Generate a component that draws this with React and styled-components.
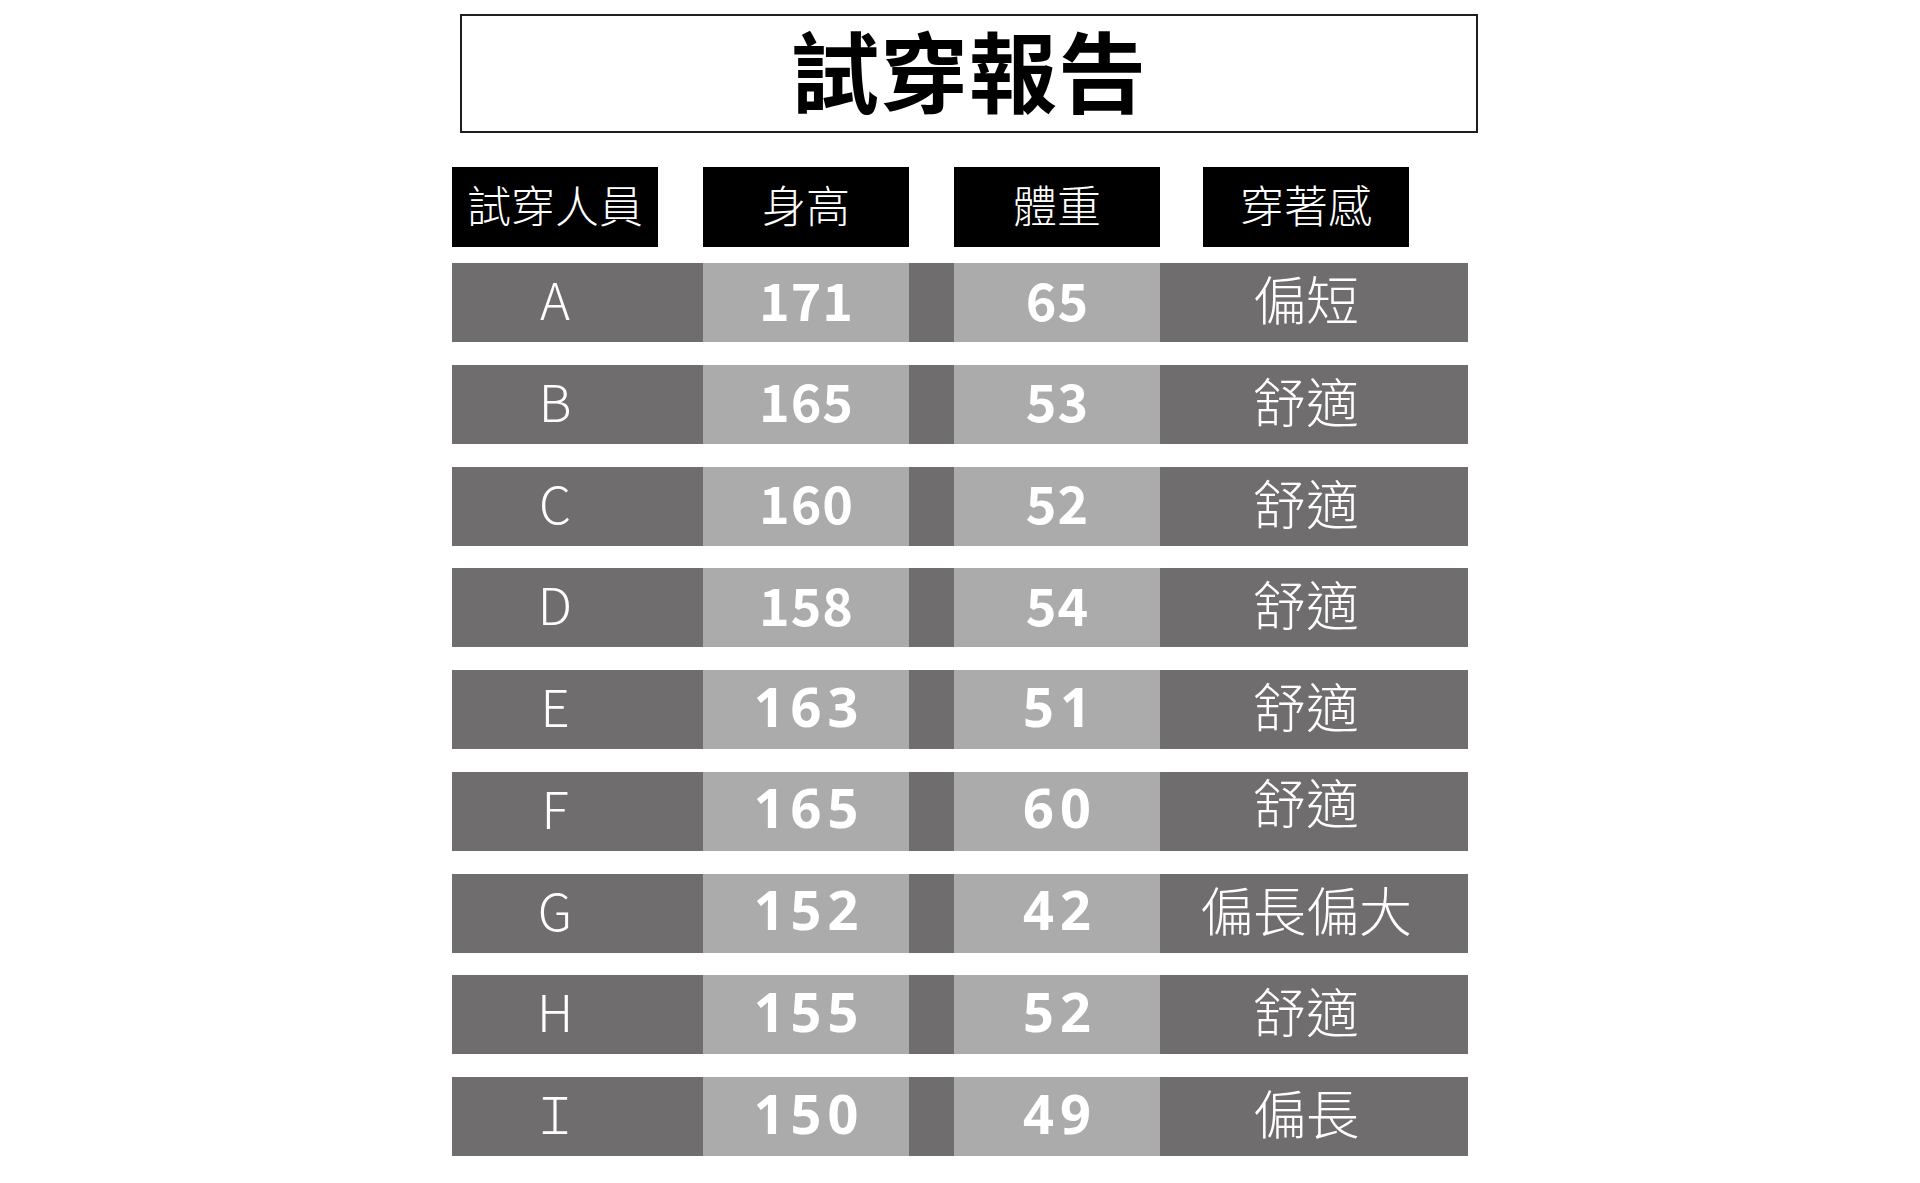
import React from 'react';
import styled, { createGlobalStyle } from 'styled-components';

// rows E–I use a wider, spaced-out digit face in the original
const rows = [
  { id: 'A', height: '171', weight: '65', feel: '偏短' },
  { id: 'B', height: '165', weight: '53', feel: '舒適' },
  { id: 'C', height: '160', weight: '52', feel: '舒適' },
  { id: 'D', height: '158', weight: '54', feel: '舒適' },
  { id: 'E', height: '163', weight: '51', feel: '舒適', wide: true },
  { id: 'F', height: '165', weight: '60', feel: '舒適', wide: true, lift: true },
  { id: 'G', height: '152', weight: '42', feel: '偏長偏大', wide: true },
  { id: 'H', height: '155', weight: '52', feel: '舒適', wide: true },
  { id: 'I', label: 'Ｉ', height: '150', weight: '49', feel: '偏長', wide: true },
];

const headers = ['試穿人員', '身高', '體重', '穿著感'];

const App = () => {
  return (
    <Page>
      <GlobalStyle />
      <Report>
        <TitleBox>
          <Title>試穿報告</Title>
        </TitleBox>

        <HeaderRow>
          {headers.map((h, i) => (
            <HeaderCell key={h} col={i * 2 + 1}>{h}</HeaderCell>
          ))}
        </HeaderRow>

        <Rows>
          {rows.map((r) => (
            <Row key={r.id}>
              <TextCell col={1}>{r.label || r.id}</TextCell>
              <NumCell col={3} wide={r.wide}>{r.height}</NumCell>
              <NumCell col={5} wide={r.wide}>{r.weight}</NumCell>
              <TextCell col={7} big lift={r.lift}>{r.feel}</TextCell>
            </Row>
          ))}
        </Rows>
      </Report>
    </Page>
  );
};

export default App;

const GlobalStyle = createGlobalStyle`
  html, body {
    margin: 0;
    padding: 0;
    background: #ffffff;
  }
  body {
    font-family: "Noto Sans CJK TC", "Noto Sans", sans-serif;
  }
`;

const DARK = '#6f6d6e';
const LIGHT = '#acabac';
const COLS = '206px 45px 206px 45px 206px 43px 206px 59px';

const Page = styled.div`
  width: 1920px;
  height: 1183px;
  overflow: hidden;
  display: flex;
  padding-left: 452px;
  padding-top: 14px;
  box-sizing: border-box;
`;

const Report = styled.div`
  width: 1016px;
  display: flex;
  flex-direction: column;
`;

const TitleBox = styled.div`
  margin-left: 8px;
  width: 1018px;
  height: 119px;
  box-sizing: border-box;
  border: 2px solid #1e1e1e;
  display: flex;
  align-items: center;
  justify-content: center;
  padding-bottom: 12px;
`;

const Title = styled.h1`
  margin: 0;
  font-family: "Noto Sans CJK TC", sans-serif;
  font-weight: 700;
  font-size: 88px;
  line-height: 1;
  color: #000;
  letter-spacing: 1px;
`;

const HeaderRow = styled.div`
  margin-top: 34px;
  display: grid;
  grid-template-columns: ${COLS};
  grid-template-rows: 80px;
`;

const HeaderCell = styled.div`
  grid-column: ${(p) => p.col};
  background: #000;
  color: #fff;
  display: flex;
  align-items: center;
  justify-content: center;
  white-space: nowrap;
  font-weight: 300;
  font-size: 44px;
  line-height: 1;
  padding-bottom: 6px;
`;

const Rows = styled.div`
  margin-top: 16px;
  display: flex;
  flex-direction: column;
  gap: 22.75px;
`;

const Row = styled.div`
  display: grid;
  grid-template-columns: ${COLS};
  grid-template-rows: 79px;
  background: ${DARK};
`;

const TextCell = styled.div`
  grid-column: ${(p) => p.col};
  min-width: 0;
  color: #fff;
  display: flex;
  align-items: center;
  justify-content: center;
  white-space: nowrap;
  font-size: ${(p) => (p.big ? '53px' : '51px')};
  font-weight: 300;
  line-height: 1;
  padding-bottom: ${(p) => (p.lift ? '20px' : '8px')};
`;

const NumCell = styled.div`
  grid-column: ${(p) => p.col};
  min-width: 0;
  background: ${LIGHT};
  color: #fff;
  display: flex;
  align-items: center;
  justify-content: center;
  white-space: nowrap;
  font-family: ${(p) => (p.wide ? '"Noto Sans", "Open Sans", sans-serif' : '"Noto Sans CJK TC", sans-serif')};
  font-size: ${(p) => (p.wide ? '54px' : '52px')};
  font-weight: 700;
  letter-spacing: ${(p) => (p.wide ? '6px' : '1px')};
  padding-left: ${(p) => (p.wide ? '6px' : '1px')};
  line-height: 1;
  padding-bottom: 8px;
`;
